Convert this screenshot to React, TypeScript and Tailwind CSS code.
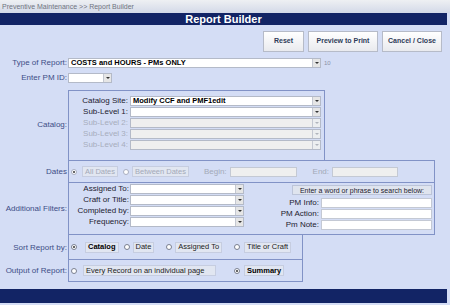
import React from 'react';

const Arrow = ({ disabled = false }: { disabled?: boolean }) => (
    <div className={`flex h-full w-[8px] shrink-0 items-center justify-center border-l border-[#c4c8d2] ${disabled ? 'bg-[#eceef0]' : 'bg-[#e6e6e6]'}`}>
        <div className={`h-0 w-0 border-x-[2px] border-t-[2px] border-x-transparent ${disabled ? 'border-t-[#b0b4bc]' : 'border-t-[#333]'}`} />
    </div>
);

const Select = ({ value, width, disabled = false }: { value?: string; width: string; disabled?: boolean }) => (
    <div className={`flex h-[10px] items-center border border-[#b4bac8] ${disabled ? 'bg-[#efefef]' : 'bg-white'} ${width}`}>
        <span className="flex-1 truncate pl-[2px] text-[7.5px] font-bold leading-none text-black">{value}</span>
        <Arrow disabled={disabled} />
    </div>
);

const Radio = ({ checked = false, disabled = false }: { checked?: boolean; disabled?: boolean }) => (
    <span className={`flex h-[6px] w-[6px] shrink-0 items-center justify-center rounded-full border ${disabled ? 'border-[#a8aec0]' : 'border-[#7a8090]'} bg-white`}>
        {checked && <span className="h-[2px] w-[2px] rounded-full bg-[#333]" />}
    </span>
);

const Chip = ({ children, className = '', bold = false, muted = false }: { children: React.ReactNode; className?: string; bold?: boolean; muted?: boolean }) => (
    <span className={`flex h-[11px] items-center whitespace-nowrap border border-[#c6cde0] bg-[#e1e6f1] px-[2px] text-[7.5px] leading-none ${bold ? 'font-bold text-black' : ''} ${muted ? 'text-[#a3a9b8]' : 'text-[#222]'} ${className}`}>
        {children}
    </span>
);

const SideLabel = ({ children }: { children: React.ReactNode }) => (
    <div className="w-[68px] shrink-0 whitespace-nowrap pr-[1px] text-right text-[8px] leading-none text-[#3d4d86]">{children}</div>
);

const catalogRows = [
    { label: 'Catalog Site:', value: 'Modify CCF and PMF1edit' },
    { label: 'Sub-Level 1:', value: '' },
    { label: 'Sub-Level 2:', disabled: true },
    { label: 'Sub-Level 3:', disabled: true },
    { label: 'Sub-Level 4:', disabled: true },
];

const filterRows = ['Assigned To:', 'Craft or Title:', 'Completed by:', 'Frequency:'];
const searchRows = ['PM Info:', 'PM Action:', 'Pm Note:'];

export default function App() {
    return (
        <div className="h-[305px] w-[450px] overflow-hidden bg-[#d4ddf5] font-['Liberation_Sans',Arial,sans-serif]">
            <div className="h-[13px] bg-gradient-to-b from-[#eef0f3] to-[#d3d9e8] pl-[2px] text-[7px] leading-[13px] text-[#707480]">
                Preventive Maintenance &gt;&gt; Report Builder
            </div>
            <div className="h-[12px] w-[447px] bg-[#122465] text-center text-[11px] font-bold leading-[12px] text-white">Report Builder</div>

            <div className="mt-[6px] flex justify-end gap-[4px] pr-[8px]">
                {[
                    { label: 'Reset', w: 'w-[41px]' },
                    { label: 'Preview to Print', w: 'w-[70px]' },
                    { label: 'Cancel / Close', w: 'w-[60px]' },
                ].map(btn => (
                    <button
                        key={btn.label}
                        type="button"
                        className={`h-[21px] ${btn.w} border border-[#b6bbc8] bg-gradient-to-b from-white to-[#e9eaee] text-[7px] font-bold text-[#2e3a58]`}
                    >
                        {btn.label}
                    </button>
                ))}
            </div>

            <div className="mt-[6px] flex items-center">
                <SideLabel>Type of Report:</SideLabel>
                <Select value="COSTS and HOURS - PMs ONLY" width="w-[253px]" />
                <span className="ml-[3px] text-[6px] text-[#8a92a8]">10</span>
            </div>

            <div className="mt-[5px] flex items-center">
                <SideLabel>Enter PM ID:</SideLabel>
                <Select width="w-[44px]" />
            </div>

            <div className="mt-[7px] flex items-center">
                <SideLabel>Catalog:</SideLabel>
                <div className="flex w-[257px] flex-col gap-[1px] border-x border-t border-[#8192c6] pb-[10px] pt-[5px]">
                    {catalogRows.map(row => (
                        <div key={row.label} className="flex items-center">
                            <span className={`w-[61px] whitespace-nowrap pr-[2px] text-right text-[8px] leading-none ${row.disabled ? 'text-[#a7adbd]' : 'text-[#1d2130]'}`}>{row.label}</span>
                            <Select value={row.value} width="w-[191px]" disabled={row.disabled} />
                        </div>
                    ))}
                </div>
            </div>

            <div className="flex items-center">
                <SideLabel>Dates</SideLabel>
                <div className="flex h-[23px] w-[367px] items-center border border-[#8192c6] pl-[2px]">
                    <Radio checked disabled />
                    <Chip muted className="ml-[5px]">All Dates</Chip>
                    <span className="ml-[5px]"><Radio disabled /></span>
                    <Chip muted className="ml-[3px]">Between Dates</Chip>
                    <span className="ml-[15px] text-[8px] text-[#a3a9b8]">Begin:</span>
                    <div className="ml-[3px] h-[10px] w-[67px] border border-[#c4c9d4] bg-[#efefef]" />
                    <span className="ml-[16px] text-[8px] text-[#a3a9b8]">End:</span>
                    <div className="ml-[3px] h-[10px] w-[66px] border border-[#c4c9d4] bg-[#efefef]" />
                </div>
            </div>

            <div className="flex items-center">
                <SideLabel>Additional Filters:</SideLabel>
                <div className="flex h-[52px] w-[367px] border-x border-b border-[#8192c6]">
                    <div className="flex flex-col gap-[1px] pt-[1px]">
                        {filterRows.map(label => (
                            <div key={label} className="flex items-center">
                                <span className="w-[61px] whitespace-nowrap pr-[1px] text-right text-[8px] leading-none text-[#1d2130]">{label}</span>
                                <Select width="w-[114px]" />
                            </div>
                        ))}
                    </div>
                    <div className="flex flex-1 flex-col items-end pr-[2px] pt-[2px]">
                        <div className="flex h-[10px] w-[140px] items-center justify-center whitespace-nowrap border border-[#bcc4d8] bg-[#dfe4ee] text-[7px] leading-none text-[#1d2130]">
                            Enter a word or phrase to search below:
                        </div>
                        <div className="mt-[3px] flex flex-col gap-[1px]">
                            {searchRows.map(label => (
                                <div key={label} className="flex items-center justify-end">
                                    <span className="whitespace-nowrap pr-[2px] text-right text-[8px] leading-none text-[#1d2130]">{label}</span>
                                    <div className="h-[10px] w-[111px] border border-[#c4c9d4] bg-white" />
                                </div>
                            ))}
                        </div>
                    </div>
                </div>
            </div>

            <div className="flex items-center">
                <SideLabel>Sort Report by:</SideLabel>
                <div className="flex h-[25px] w-[235px] items-center border-x border-b border-[#8192c6] pl-[2px]">
                    <Radio checked />
                    <Chip bold className="ml-[8px]">Catalog</Chip>
                    <span className="ml-[5px]"><Radio /></span>
                    <Chip className="ml-[3px]">Date</Chip>
                    <span className="ml-[12px]"><Radio /></span>
                    <Chip className="ml-[3px]">Assigned To</Chip>
                    <span className="ml-[12px]"><Radio /></span>
                    <Chip className="ml-[4px]">Title or Craft</Chip>
                </div>
            </div>

            <div className="flex items-center">
                <SideLabel>Output of Report:</SideLabel>
                <div className="flex h-[22px] w-[235px] items-center border-x border-b border-[#8192c6] pl-[2px]">
                    <Radio />
                    <Chip className="ml-[6px] w-[133px]">Every Record on an individual page</Chip>
                    <span className="ml-[18px]"><Radio checked /></span>
                    <Chip bold className="ml-[4px]">Summary</Chip>
                </div>
            </div>

            <div className="mt-[7px] h-[14px] w-[447px] bg-[#122465]" />
        </div>
    );
}
